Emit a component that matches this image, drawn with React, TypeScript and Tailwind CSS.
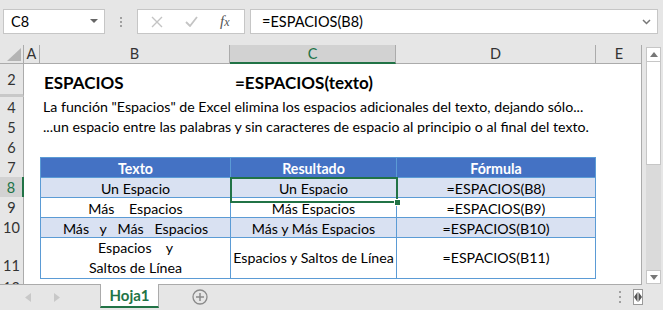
import React from "react";

const cols = "grid grid-cols-[24px_16px_190px_166px_200px_46px]";

const RowHead = ({ n, active }: { n: string; active?: boolean }) => (
  <div
    className={
      "flex items-end justify-center pb-[1px] border-b border-[#c8c8c8] text-[14.5px] " +
      (active
        ? "bg-[#d2d2d2] text-[#217346] border-r-2 border-r-[#217346]"
        : "bg-[#e6e6e6] text-[#333] border-r border-r-[#ababab]")
    }
  >
    {n}
  </div>
);

const TableCell = ({
  children,
  band,
  head,
  last,
  lastRow,
}: {
  children?: React.ReactNode;
  band?: boolean;
  head?: boolean;
  last?: boolean;
  lastRow?: boolean;
}) => (
  <div
    className={
      "relative flex items-center justify-center text-center whitespace-pre leading-[20px] border-l border-t border-[#5b9bd5] " +
      (last ? "border-r " : "") +
      (lastRow ? "border-b " : "") +
      (head ? "bg-[#4472c4] text-white font-bold" : band ? "bg-[#d9e1f2]" : "bg-white")
    }
  >
    {children}
  </div>
);

export default function App() {
  const rows = [
    { n: "8", b: "Un Espacio", c: "Un Espacio", d: "=ESPACIOS(B8)", band: true },
    { n: "9", b: "Más    Espacios", c: "Más Espacios", d: "=ESPACIOS(B9)" },
    { n: "10", b: "Más   y   Más   Espacios", c: "Más y Más Espacios", d: "=ESPACIOS(B10)", band: true },
  ];

  return (
    <div className="w-[663px] h-[310px] overflow-hidden bg-[#e6e6e6] text-[14.2px] text-black font-['Lato',sans-serif]">
      {/* formula bar */}
      <div className="h-[45px] flex items-start pt-[9px] pl-[3px] text-[14.5px]">
        <div className="w-[102px] h-[25px] bg-white border border-[#c6c6c6] flex items-center justify-between pl-[7px] pr-[6px]">
          <span>C8</span>
          <svg width="8" height="5" viewBox="0 0 8 5">
            <path d="M0 0h8L4 4z" fill="#666" />
          </svg>
        </div>
        <div className="w-[32px] h-[25px] flex flex-col items-center justify-center gap-[2px]">
          <span className="w-[2px] h-[2px] bg-[#a0a0a0]" />
          <span className="w-[2px] h-[2px] bg-[#a0a0a0]" />
          <span className="w-[2px] h-[2px] bg-[#a0a0a0]" />
        </div>
        <div className="w-[108px] h-[25px] bg-white border border-[#c6c6c6] flex items-center">
          <svg className="ml-[13px]" width="12" height="12" viewBox="0 0 12 12">
            <path d="M1 1l10 10M11 1L1 11" stroke="#c4c4c4" strokeWidth="1.4" />
          </svg>
          <svg className="ml-[22px]" width="13" height="11" viewBox="0 0 13 11">
            <path d="M1 6l4 4 7-9" stroke="#c4c4c4" strokeWidth="1.8" fill="none" />
          </svg>
          <span className="ml-[22px] italic font-['Liberation_Serif',serif] text-[15px] text-[#555]">
            f<span className="text-[12px]">x</span>
          </span>
        </div>
        <div className="ml-[5px] w-[408px] h-[25px] bg-white border border-[#c6c6c6] flex items-center justify-between pl-[11px] pr-[6px]">
          <span>=ESPACIOS(B8)</span>
          <svg width="9" height="6" viewBox="0 0 9 6">
            <path d="M1 1l3.5 3.5L8 1" stroke="#777" strokeWidth="1.5" fill="none" />
          </svg>
        </div>
      </div>

      <div className="flex h-[240px]">
        {/* sheet */}
        <div className="w-[642px] bg-white border-r border-[#ababab] border-b border-b-[#ababab] overflow-hidden">
          {/* column headers */}
          <div className={cols + " h-[18px] bg-[#e6e6e6] text-[#333] leading-[17px] text-[14.5px]"}>
            <div className="relative border-r border-b border-[#ababab]">
              <svg className="absolute right-[2px] bottom-[2px]" width="14" height="13" viewBox="0 0 14 13">
                <path d="M14 0v13H0z" fill="#b4b4b4" />
              </svg>
            </div>
            <div className="border-r border-b border-[#ababab] text-center">A</div>
            <div className="border-r border-b border-[#ababab] text-center">B</div>
            <div className="bg-[#d2d2d2] text-[#217346] border-r border-[#ababab] border-b-2 border-b-[#217346] text-center">C</div>
            <div className="border-r border-b border-[#ababab] text-center">D</div>
            <div className="border-b border-[#ababab] text-center">E</div>
          </div>

          {/* row 2 */}
          <div className={cols + " h-[34px]"}>
            <div className="flex items-center justify-center pt-[3px] bg-[#e6e6e6] text-[#333] text-[14.5px] border-r border-[#ababab] border-b-[3px] border-b-[#c8c8c8]">2</div>
            <div />
            <div className="flex items-center pl-[4px] pt-[5px] font-bold text-[17px]">ESPACIOS</div>
            <div className="col-span-3 flex items-center pt-[5px] font-bold text-[17px] -ml-[170px] pl-[175px]">=ESPACIOS(texto)</div>
          </div>

          {/* rows 4-6 */}
          <div className={cols + " h-[20px]"}>
            <RowHead n="4" />
            <div />
            <div className="col-span-4 pl-[3px] leading-[20px] whitespace-nowrap">
              La función "Espacios" de Excel elimina los espacios adicionales del texto, dejando sólo...
            </div>
          </div>
          <div className={cols + " h-[20px]"}>
            <RowHead n="5" />
            <div />
            <div className="col-span-4 pl-[3px] leading-[20px] whitespace-nowrap">
              ...un espacio entre las palabras y sin caracteres de espacio al principio o al final del texto.
            </div>
          </div>
          <div className={cols + " h-[20px]"}>
            <RowHead n="6" />
          </div>

          {/* table header */}
          <div className={cols + " h-[20px]"}>
            <RowHead n="7" />
            <div />
            <TableCell head>Texto</TableCell>
            <TableCell head>Resultado</TableCell>
            <TableCell head last>Fórmula</TableCell>
          </div>

          {rows.map((r) => (
            <div key={r.n} className={cols + " h-[20px]"}>
              <RowHead n={r.n} active={r.n === "8"} />
              <div />
              <TableCell band={r.band}>{r.b}</TableCell>
              <TableCell band={r.band}>
                {r.c}
                {r.n === "8" && (
                  <>
                    <span className="absolute z-10 -left-[1px] -top-[1px] -right-[2px] -bottom-[2px] border-2 border-[#217346]" />
                    <span className="absolute z-20 -right-[5px] -bottom-[5px] w-[7px] h-[7px] bg-[#217346] border border-white" />
                  </>
                )}
              </TableCell>
              <TableCell band={r.band} last>
                {r.d}
              </TableCell>
            </div>
          ))}

          <div className={cols + " h-[40px]"}>
            <RowHead n="11" />
            <div />
            <TableCell lastRow>{"Espacios    y\nSaltos de Línea"}</TableCell>
            <TableCell lastRow>Espacios y Saltos de Línea</TableCell>
            <TableCell lastRow last>
              =ESPACIOS(B11)
            </TableCell>
          </div>
          <div className={cols + " h-[20px]"}>
            <RowHead n="12" />
          </div>
        </div>

        {/* vertical scrollbar */}
        <div className="w-[21px] flex flex-col items-start pl-[4px] pt-[2px] pb-[1px]">
          <div className="w-[15px] h-[15px] bg-white border border-[#c6c6c6] flex items-center justify-center">
            <svg width="8" height="5" viewBox="0 0 8 5">
              <path d="M0 5h8L4 0z" fill="#777" />
            </svg>
          </div>
          <div className="w-[15px] h-[104px] bg-white border border-[#c6c6c6] -mt-[1px]" />
          <div className="w-[15px] flex-1 bg-[#dadada]" />
          <div className="w-[15px] h-[14px] bg-white border border-[#c6c6c6] flex items-center justify-center">
            <svg width="8" height="5" viewBox="0 0 8 5">
              <path d="M0 0h8L4 5z" fill="#777" />
            </svg>
          </div>
        </div>
      </div>

      {/* sheet tabs */}
      <div className="h-[25px] flex items-start">
        <div className="w-[100px] h-[24px] flex items-center pl-[25px] gap-[23px]">
          <svg width="6" height="9" viewBox="0 0 6 9">
            <path d="M6 0v9L0 4.5z" fill="#c8c8c8" />
          </svg>
          <svg width="6" height="9" viewBox="0 0 6 9">
            <path d="M0 0v9L6 4.5z" fill="#c8c8c8" />
          </svg>
        </div>
        <div className="w-[59px] h-[24px] -mt-[1px] bg-white border-x border-[#ababab] border-b-2 border-b-[#217346] flex items-center justify-center font-bold text-[#217346] text-[15px]">
          Hoja1
        </div>
        <div className="ml-[33px] h-[24px] flex items-center">
          <svg width="16" height="16" viewBox="0 0 16 16">
            <circle cx="8" cy="8" r="7" stroke="#8a8a8a" strokeWidth="1.3" fill="none" />
            <path d="M8 4v8M4 8h8" stroke="#8a8a8a" strokeWidth="1.5" />
          </svg>
        </div>
        <div className="ml-auto mr-[20px] h-[24px] flex items-center gap-[12px]">
          <div className="flex flex-col gap-[3px]">
            <span className="w-[2px] h-[2px] bg-[#a0a0a0]" />
            <span className="w-[2px] h-[2px] bg-[#a0a0a0]" />
            <span className="w-[2px] h-[2px] bg-[#a0a0a0]" />
          </div>
          <div className="w-[10px] h-[16px] border border-[#9a9a9a] bg-white flex items-center justify-center">
            <svg width="8" height="10" viewBox="0 0 8 10">
              <path d="M3.5 0v10L0 5zM4.5 0v10L8 5z" fill="#555" />
            </svg>
          </div>
        </div>
      </div>
    </div>
  );
}
